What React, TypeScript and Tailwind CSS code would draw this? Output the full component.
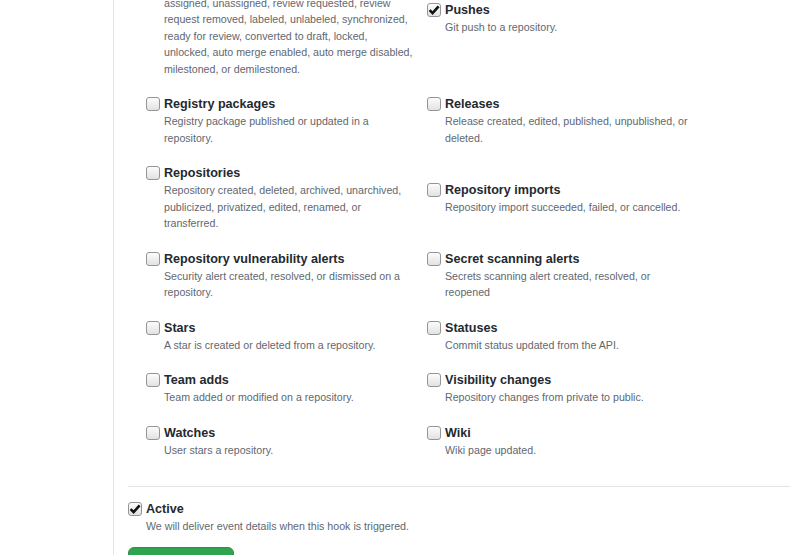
type HookEvent = {
  title: string;
  description: string;
  checked?: boolean;
};

// events laid out in pairs, like the two columns of the settings form
const ROWS: [HookEvent, HookEvent][] = [
  [
    {
      title: "Pull requests",
      description:
        "Pull request opened, closed, reopened, edited, assigned, unassigned, review requested, review request removed, labeled, unlabeled, synchronized, ready for review, converted to draft, locked, unlocked, auto merge enabled, auto merge disabled, milestoned, or demilestoned.",
    },
    { title: "Pushes", description: "Git push to a repository.", checked: true },
  ],
  [
    { title: "Registry packages", description: "Registry package published or updated in a repository." },
    { title: "Releases", description: "Release created, edited, published, unpublished, or deleted." },
  ],
  [
    {
      title: "Repositories",
      description: "Repository created, deleted, archived, unarchived, publicized, privatized, edited, renamed, or transferred.",
    },
    { title: "Repository imports", description: "Repository import succeeded, failed, or cancelled." },
  ],
  [
    {
      title: "Repository vulnerability alerts",
      description: "Security alert created, resolved, or dismissed on a repository.",
    },
    { title: "Secret scanning alerts", description: "Secrets scanning alert created, resolved, or reopened" },
  ],
  [
    { title: "Stars", description: "A star is created or deleted from a repository." },
    { title: "Statuses", description: "Commit status updated from the API." },
  ],
  [
    { title: "Team adds", description: "Team added or modified on a repository." },
    { title: "Visibility changes", description: "Repository changes from private to public." },
  ],
  [
    { title: "Watches", description: "User stars a repository." },
    { title: "Wiki", description: "Wiki page updated." },
  ],
];

const Checkbox = ({ checked }: { checked?: boolean }) => (
  <span className="mt-[1px] mr-[4px] flex h-[14px] w-[14px] shrink-0 items-center justify-center rounded-[3px] border border-[#959595] bg-gradient-to-b from-[#fcfcfc] to-[#e2e2e2]">
    {checked && (
      <svg width="12" height="12" viewBox="0 0 12 12">
        <path d="M1.6 6.2 L4.6 9.2 L10.6 2.4" fill="none" stroke="#111" strokeWidth="2.6" strokeLinejoin="miter" />
      </svg>
    )}
  </span>
);

const EventChoice = ({ event }: { event: HookEvent }) => (
  <div className="flex w-[281px] items-start">
    <Checkbox checked={event.checked} />
    <div className="w-[251px]">
      <div className="text-[12.6px] font-bold leading-[17px] text-[#24292e]">{event.title}</div>
      <p className="text-[10.65px] leading-[16.5px] text-[#5f6770]">{event.description}</p>
    </div>
  </div>
);

export default function App() {
  return (
    <div className="flex h-[555px] w-[790px] overflow-hidden bg-white font-['Liberation_Sans',Arial,sans-serif]">
      <div className="w-[113px] shrink-0" />
      <div className="h-full shrink-0 border-l border-[#e1e4e8] pl-[14px]">
        <div className="-mt-[39px] w-[662px]">
          {/* Event checkboxes */}
          <div className="ml-[18px] flex flex-col gap-[19px]">
            {ROWS.map(([left, right]) => (
              <div key={left.title} className="flex items-center">
                <EventChoice event={left} />
                <EventChoice event={right} />
              </div>
            ))}
          </div>

          <div className="mt-[28px] h-px bg-[#e1e4e8]" />

          {/* Active toggle */}
          <div className="mt-[14px] flex items-start">
            <Checkbox checked />
            <div>
              <div className="text-[12.6px] font-bold leading-[17px] text-[#24292e]">Active</div>
              <p className="text-[10.65px] leading-[16.5px] text-[#5f6770]">
                We will deliver event details when this hook is triggered.
              </p>
            </div>
          </div>

          <button className="mt-[12px] flex h-8 w-[106px] items-center justify-center rounded-md border border-[#2a9147] bg-[#2ea44f] text-[12.6px] font-bold text-white">
            Add webhook
          </button>
        </div>
      </div>
    </div>
  );
}
